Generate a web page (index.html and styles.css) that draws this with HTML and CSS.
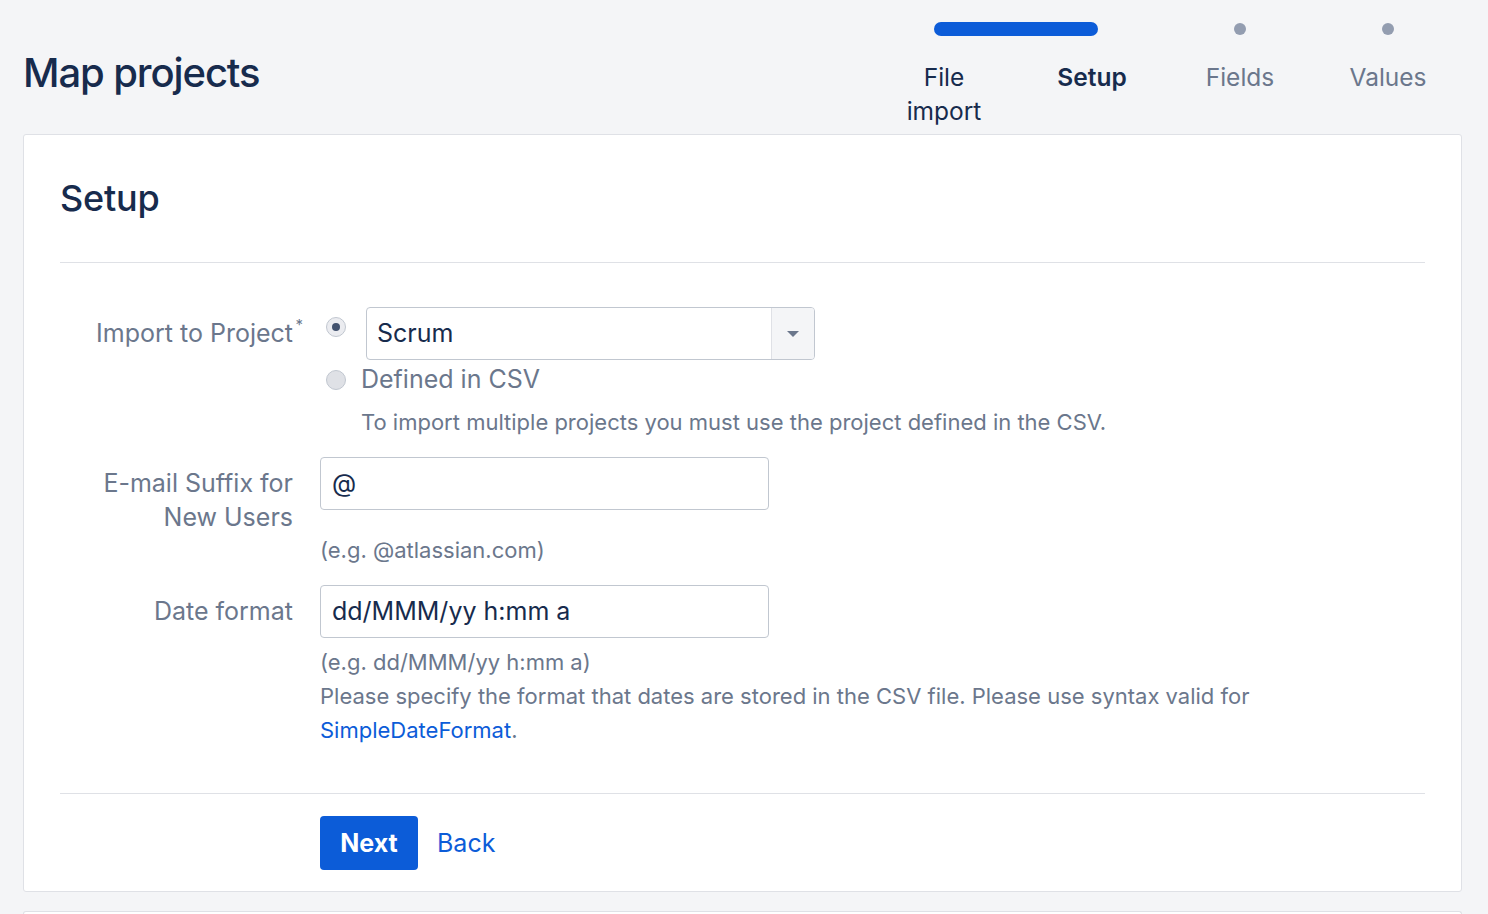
FILE: index.html
```html
<!DOCTYPE html>
<html lang="en">
<head>
<meta charset="utf-8">
<title>Map projects</title>
<link rel="stylesheet" href="styles.css">
</head>
<body>
<div class="page">
  <header class="page-header">
    <h1 class="page-title">Map projects</h1>
    <ol class="tracker">
      <li class="tracker-bar" aria-hidden="true"></li>
      <li class="step done"><span class="step-label">File import</span></li>
      <li class="step current"><span class="step-label">Setup</span></li>
      <li class="step todo"><span class="step-label">Fields</span></li>
      <li class="step todo"><span class="step-label">Values</span></li>
    </ol>
  </header>

  <section class="card">
    <h2 class="card-title">Setup</h2>
    <form class="form">
      <div class="row">
        <div class="label">Import to Project<sup class="req">*</sup></div>
        <div class="field">
          <div class="radio-line radio-top">
            <span class="radio checked"></span>
            <div class="select">
              <span class="select-value">Scrum</span>
              <span class="select-btn"><span class="caret"></span></span>
            </div>
          </div>
          <div class="radio-line">
            <span class="radio"></span>
            <span class="radio-text">Defined in CSV</span>
          </div>
          <div class="hint hint-indent">To import multiple projects you must use the project defined in the CSV.</div>
        </div>
      </div>

      <div class="row">
        <div class="label">E-mail Suffix for<br>New Users</div>
        <div class="field">
          <div class="input">@</div>
          <div class="hint hint-gap">(e.g. @atlassian.com)</div>
        </div>
      </div>

      <div class="row">
        <div class="label">Date format</div>
        <div class="field">
          <div class="input">dd/MMM/yy h:mm a</div>
          <div class="hint hint-first">(e.g. dd/MMM/yy h:mm a)</div>
          <div class="hint hint-wrap">Please specify the format that dates are stored in the CSV file. Please use syntax valid for <a class="link" href="#">SimpleDateFormat</a>.</div>
        </div>
      </div>

      <div class="actions">
        <button type="button" class="btn-primary">Next</button>
        <a class="link back" href="#">Back</a>
      </div>
    </form>
  </section>

  <section class="card card-next"></section>
</div>
</body>
</html>
```

FILE: styles.css
```css
* { box-sizing: border-box; }

html, body {
  margin: 0;
  padding: 0;
  background: #f4f5f7;
  height: 100%;
  overflow: hidden;
}

body {
  font-family: Inter, "Liberation Sans", Arial, sans-serif;
  color: #172b4d;
}

.page {
  padding: 0 26px 0 23px;
}

.page-header {
  display: flex;
  justify-content: space-between;
  align-items: flex-start;
  height: 134px;
}

.page-title {
  margin: 48px 0 0 0;
  font-size: 40px;
  font-weight: 500;
  letter-spacing: -1.1px;
  line-height: 50px;
  color: #172b4d;
}

.tracker {
  list-style: none;
  margin: 0;
  padding: 0;
  display: flex;
  position: relative;
}

.tracker-bar {
  position: absolute;
  left: 64px;
  top: 22px;
  width: 164px;
  height: 14px;
  border-radius: 7px;
  background: #0c5cd8;
}

.step {
  width: 148px;
  padding-top: 60px;
  text-align: center;
  position: relative;
  font-size: 24.5px;
  line-height: 34px;
}

.step.todo::before {
  content: "";
  position: absolute;
  top: 23px;
  left: 50%;
  margin-left: -6px;
  width: 12px;
  height: 12px;
  border-radius: 50%;
  background: #939db0;
}

.step-label {
  display: inline-block;
  max-width: 100px;
}

.step.done .step-label { color: #172b4d; }
.step.current .step-label { color: #172b4d; font-weight: 600; }
.step.todo .step-label { color: #6b778c; }

.card {
  background: #fff;
  border: 1px solid #dfe1e6;
  border-radius: 3px;
  padding: 0 36px 21px 36px;
}

.card-title {
  margin: 0;
  padding: 43px 0 44px 0;
  font-size: 36px;
  font-weight: 500;
  line-height: 40px;
  letter-spacing: -0.2px;
  color: #172b4d;
  border-bottom: 1px solid #dfe1e6;
}

.form {
  padding-top: 44px;
}

.row {
  display: flex;
  align-items: flex-start;
  margin-bottom: 18px;
}

.label {
  width: 234px;
  flex: none;
  text-align: right;
  padding-top: 9px;
  padding-right: 1px;
  font-size: 25px;
  line-height: 34px;
  color: #6b778c;
  position: relative;
}

.req {
  position: absolute;
  font-size: 15px;
  line-height: 1;
  top: 10px;
  right: -9px;
  color: #6b778c;
}

.field {
  margin-left: 26px;
  flex: 1;
}

.radio-line {
  display: flex;
  align-items: center;
  gap: 15px;
}

.radio-top {
  align-items: flex-start;
  gap: 20px;
}

.radio-top .radio {
  margin-top: 10px;
}

.radio {
  width: 20px;
  height: 20px;
  margin-left: 6px;
  border-radius: 50%;
  background: #dfe1e6;
  border: 1px solid #c1c7d0;
  flex: none;
  position: relative;
}

.radio.checked {
  background: #ebecf0;
}

.radio.checked::after {
  content: "";
  position: absolute;
  left: 5px;
  top: 5px;
  width: 8px;
  height: 8px;
  border-radius: 50%;
  background: #42526e;
}

.radio-text {
  font-size: 25px;
  line-height: 39px;
  color: #6b778c;
}

.select {
  width: 449px;
  height: 53px;
  border: 1px solid #c1c7d0;
  border-radius: 4px;
  display: flex;
  background: #fff;
  overflow: hidden;
}

.select-value {
  flex: 1;
  padding-left: 10px;
  font-size: 25px;
  line-height: 51px;
  color: #172b4d;
}

.select-btn {
  width: 43px;
  border-left: 1px solid #dfe1e6;
  background: #f4f5f7;
  display: flex;
  align-items: center;
  justify-content: center;
}

.caret {
  width: 0;
  height: 0;
  border-left: 6px solid transparent;
  border-right: 6px solid transparent;
  border-top: 6px solid #6b778c;
}

.input {
  width: 449px;
  height: 53px;
  border: 1px solid #c1c7d0;
  border-radius: 4px;
  background: #fff;
  padding-left: 11px;
  font-size: 25px;
  line-height: 51px;
  color: #172b4d;
}

.hint {
  font-size: 22px;
  line-height: 34px;
  color: #6b778c;
}

.hint-indent {
  padding-left: 41px;
  margin-top: 6px;
}

.hint-gap {
  margin-top: 23px;
}

.hint-first {
  margin-top: 7px;
}

.hint-wrap {
  max-width: 1000px;
}

.link {
  color: #0c5cd8;
  text-decoration: none;
}

.actions {
  border-top: 1px solid #dfe1e6;
  margin-top: 46px;
  padding: 22px 0 0 260px;
  display: flex;
  align-items: center;
  gap: 19px;
}

.btn-primary {
  width: 98px;
  height: 54px;
  border: none;
  border-radius: 4px;
  background: #0c5cd8;
  color: #fff;
  font-family: inherit;
  font-size: 25px;
  font-weight: 700;
  padding: 0;
}

.back {
  font-size: 25px;
}

.card-next {
  margin-top: 19px;
  height: 4px;
  padding: 0;
  border-bottom: none;
  border-radius: 3px 3px 0 0;
}
```
